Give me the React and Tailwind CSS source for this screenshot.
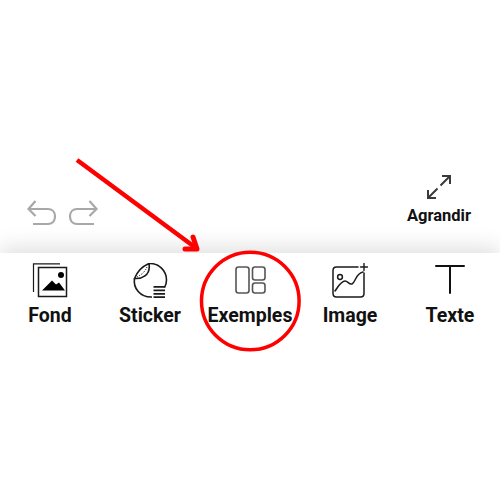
const FondIcon = () => (
  <svg width="36" height="36" viewBox="0 0 36 36" fill="none" stroke="#1a1a1a">
    <path d="M1.5 29V0.8H28" strokeWidth="1.2" />
    <rect x="6.5" y="4.5" width="28" height="29" strokeWidth="1.5" />
    <circle cx="29" cy="12" r="3" fill="#000" stroke="none" />
    <path d="M10 27.5L20 17.5L24 21.5L27 19.5L33 27.5Z" fill="#000" stroke="none" />
  </svg>
);

const StickerIcon = () => (
  <svg width="36" height="36" viewBox="0 0 36 36" fill="none" stroke="#1a1a1a" strokeWidth="1.6">
    <path d="M17 0.5C27 0 34.5 8 34.5 17C34.5 20 33.8 22.5 32.5 24.5" />
    <path d="M2.5 15.5C1 25 8 34.5 20 34" />
    <path d="M17 0.5C10 3.5 5 9 2.5 15.5C9 16 19 13 17 0.5Z" />
    <path d="M15 4C13 9 9 12 5 14" strokeWidth="1" strokeDasharray="1 1.2" />
    <path d="M21.5 23.8H33M21.5 27.3H33M21.5 30.8H33M21.5 34.2H33" strokeWidth="1.7" />
  </svg>
);

const ExemplesIcon = () => (
  <svg width="36" height="36" viewBox="0 0 36 36" fill="none" stroke="#555" strokeWidth="1.6">
    <rect x="4" y="4" width="13" height="26" rx="2.5" />
    <rect x="20.5" y="4" width="12.5" height="13" rx="2.5" />
    <rect x="20.5" y="20" width="12.5" height="10" rx="2.5" />
  </svg>
);

const ImageIcon = () => (
  <svg width="36" height="36" viewBox="0 0 36 36" fill="none" stroke="#1a1a1a" strokeWidth="1.5" strokeLinecap="round">
    <path d="M26 4H4.5C2.5 4 1 5.5 1 7.5V30.5C1 32.5 2.5 34 4.5 34H28.5C30.5 34 32 32.5 32 30.5V10" />
    <circle cx="8" cy="14" r="2.4" />
    <path d="M3 28C6 24 9 18 13 18C16 18 17 22 20 21C24 19 23 11 31 9" />
    <path d="M32 0.5V7.5M28.5 4H35.5" strokeWidth="1.4" />
  </svg>
);

const TexteIcon = () => (
  <svg width="36" height="36" viewBox="0 0 36 36" fill="none" stroke="#111" strokeWidth="2" strokeLinecap="round">
    <path d="M4 3H32M18 3V30" />
  </svg>
);

const items = [
  { label: 'Fond', icon: <FondIcon /> },
  { label: 'Sticker', icon: <StickerIcon /> },
  { label: 'Exemples', icon: <ExemplesIcon /> },
  { label: 'Image', icon: <ImageIcon /> },
  { label: 'Texte', icon: <TexteIcon /> },
];

const App = () => {
  return (
    <div className="relative flex h-[500px] w-[500px] flex-col overflow-hidden bg-white font-['Roboto',sans-serif]">
      <div className="flex h-[253px] shrink-0 items-end justify-between pr-[29px] pb-[28px] pl-[27px]">
        <div className="flex gap-[13px]">
          <svg className="overflow-visible" width="29" height="26" viewBox="0 0 29 26" fill="none" stroke="#a8a8a8" strokeWidth="2.2">
            <path d="M8.5 2L1.5 10L8.5 17M1.5 10H21C25 10 28 13 28 17.5C28 22 25 25 21 25H6" />
          </svg>
          <svg className="overflow-visible" width="29" height="26" viewBox="0 0 29 26" fill="none" stroke="#a8a8a8" strokeWidth="2.2">
            <path d="M20.5 2L27.5 10L20.5 17M27.5 10H8C4 10 1 13 1 17.5C1 22 4 25 8 25H25" />
          </svg>
        </div>
        <div className="flex flex-col items-center gap-[7px]">
          <svg width="24" height="24" viewBox="0 0 24 24" fill="none" stroke="#3a3a3a" strokeWidth="2">
            <path d="M15 1H23V9M23 1L13.5 10.5M1 15V23H9M1 23L10.5 13.5" />
          </svg>
          <span className="text-[16.5px] leading-[19px] font-bold text-[#111]">Agrandir</span>
        </div>
      </div>

      <div className="grid flex-1 grid-cols-5 content-start bg-white pt-[10px] shadow-[0_-6px_20px_rgba(0,0,0,0.12)]">
        {items.map((item) => (
          <div key={item.label} className="flex flex-col items-center gap-[5px]">
            {item.icon}
            <span className="text-[19.5px] leading-[24px] font-bold text-[#111]">{item.label}</span>
          </div>
        ))}
      </div>

      <svg className="absolute top-0 left-0" width="500" height="500" viewBox="0 0 500 500" fill="none" stroke="#ff0000">
        <path d="M77 160L196 248" strokeWidth="4.5" />
        <path d="M185 249H197L193 237" strokeWidth="5" strokeLinejoin="round" strokeLinecap="round" />
        <circle cx="250.3" cy="301" r="48.8" strokeWidth="3.5" />
      </svg>
    </div>
  );
};

export default App;
